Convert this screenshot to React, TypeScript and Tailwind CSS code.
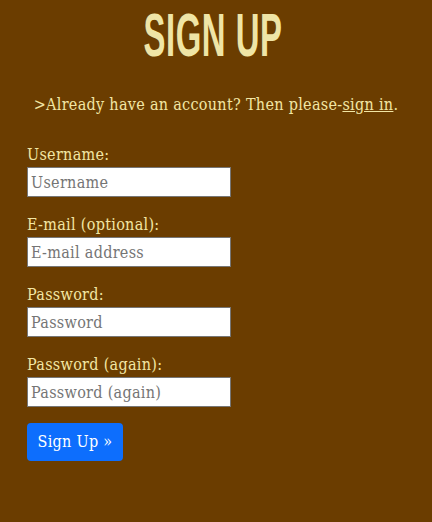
import { useState } from "react";

const fields = [
  { label: "Username:", placeholder: "Username", type: "text" },
  { label: "E-mail (optional):", placeholder: "E-mail address", type: "email" },
  { label: "Password:", placeholder: "Password", type: "password" },
  { label: "Password (again):", placeholder: "Password (again)", type: "password" },
];

export default function App() {
  const [values, setValues] = useState<string[]>(["", "", "", ""]);

  return (
    <div className="min-h-[522px] w-full bg-[#6b3d00] text-[#f2e6a4] tracking-[0.3px] font-['DejaVu_Serif_Condensed','Liberation_Serif',serif]">
      <div className="flex justify-center pt-[4px] pr-[7px]">
        <h1 className="inline-block origin-center scale-x-[0.53] font-['Liberation_Sans',sans-serif] text-[62px] font-bold leading-[62px] tracking-[1px] text-[#efe5a6]">
          SIGN UP
        </h1>
      </div>
      <p className="mt-[27px] text-center text-[16px] leading-[24px]">
        &gt;Already have an account? Then please-
        <a href="#" className="underline">
          sign in
        </a>
        .
      </p>
      <form className="mt-[26px] flex flex-col gap-4 px-[27px]">
        {fields.map((f, i) => (
          <div key={f.label} className="flex flex-col">
            <label className="text-[16px] leading-[24px]">{f.label}</label>
            <input
              type={f.type}
              placeholder={f.placeholder}
              value={values[i]}
              onChange={(e) =>
                setValues((prev) => prev.map((v, j) => (j === i ? e.target.value : v)))
              }
              className="h-[30px] w-[204px] border border-[#767676] bg-white px-[3px] text-[16px] tracking-[0.3px] text-black placeholder:text-[#757575]"
            />
          </div>
        ))}
        <div>
          <button
            type="button"
            className="h-[38px] w-[96px] rounded-[4px] bg-[#0d6efd] text-[16px] tracking-[0.3px] text-white"
          >
            Sign Up »
          </button>
        </div>
      </form>
    </div>
  );
}
